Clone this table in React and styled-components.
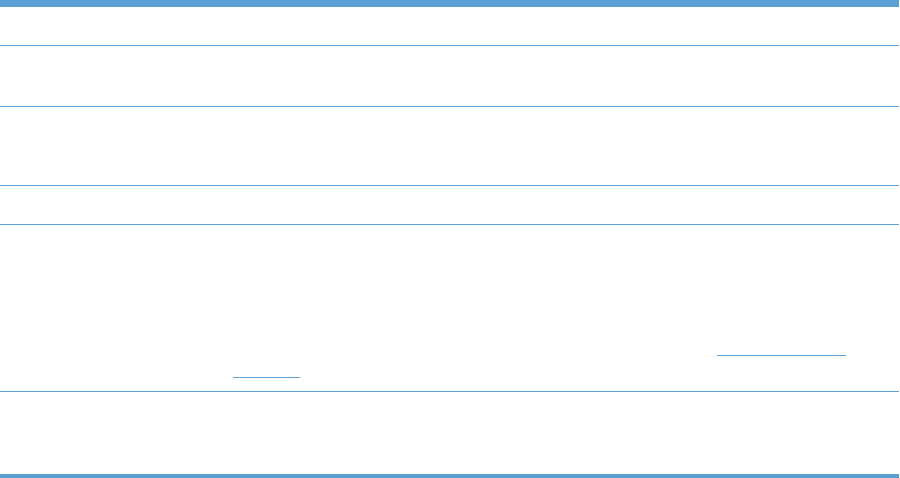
import React from "react";
import styled, { createGlobalStyle } from "styled-components";

const Global = createGlobalStyle`
  html, body { margin: 0; padding: 0; background: #ffffff; }
  body { font-family: "Liberation Sans", Arial, sans-serif; font-size: 13px; color: #000; }
`;

const BLUE = "#5aa0d5";

const Table = styled.div`
  width: 899px;
  height: 478px;
  display: flex;
  flex-direction: column;
  background: #fff;
`;

const Bar = styled.div`
  height: ${(p) => p.$h}px;
  background: ${BLUE};
  flex: none;
`;

const Row = styled.div`
  height: ${(p) => p.$h}px;
  flex: none;
  box-sizing: border-box;
  border-bottom: ${(p) => (p.$last ? "none" : `1px solid ${BLUE}`)};
  display: grid;
  grid-template-columns: 233px 1fr;
`;

const Cell = styled.div`
  padding-top: ${(p) => p.$pt || 0}px;
  display: flex;
  flex-direction: column;
`;

const Line = styled.div`
  height: 22px;
  display: flex;
  align-items: flex-start;
  padding-left: ${(p) => p.$indent || 0}px;
`;

const Link = styled.a`
  display: block;
  box-sizing: border-box;
  width: ${(p) => p.$w}px;
  height: 21px;
  border-bottom: 1px solid ${BLUE};
  color: #1a5fa8;
`;

export default function App() {
  return (
    <>
      <Global />
      <Table>
        <Bar $h={7} />
        <Row $h={39}>
          <Cell />
          <Cell />
        </Row>
        <Row $h={61}>
          <Cell />
          <Cell />
        </Row>
        <Row $h={79}>
          <Cell />
          <Cell />
        </Row>
        <Row $h={39}>
          <Cell />
          <Cell />
        </Row>
        <Row $h={167}>
          <Cell />
          <Cell $pt={110}>
            <Line $indent={484}>
              <Link $w={129} aria-label="link" />
            </Line>
            <Line>
              <Link $w={67} aria-label="link" />
            </Line>
          </Cell>
        </Row>
        <Row $h={82} $last>
          <Cell />
          <Cell />
        </Row>
        <Bar $h={4} />
      </Table>
    </>
  );
}
